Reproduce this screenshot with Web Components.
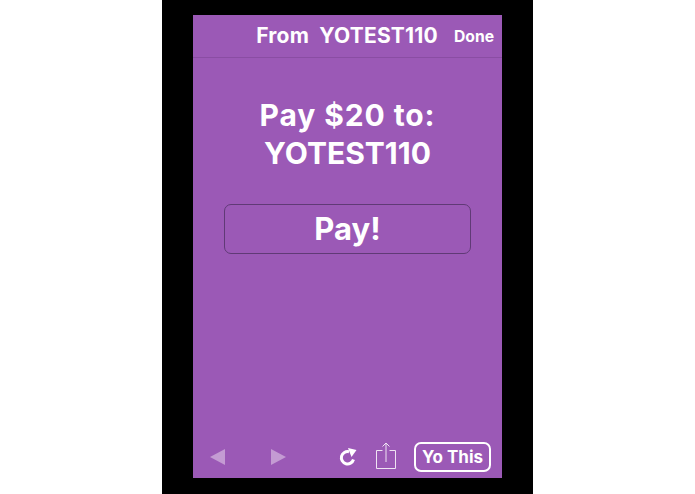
<!DOCTYPE html>
<html>
<head>
<meta charset="utf-8">
<title>Yo Pay</title>
<style>
html, body { margin: 0; padding: 0; background: #fff; height: 100%; overflow: hidden; }
body { font-family: "Inter", "Liberation Sans", sans-serif; color: #fff; }
</style>
</head>
<body>
<phone-frame>
    <top-bar slot="top" title-text="From  YOTEST110" action="Done"></top-bar>
    <pay-panel amount="$20" payee="YOTEST110"></pay-panel>
    <bottom-bar slot="bottom"></bottom-bar>
</phone-frame>

<script>
class PhoneFrame extends HTMLElement {
    constructor() {
        super();
        this.shadowDOM = this.attachShadow({mode: 'open'});
        this.shadowDOM.innerHTML = `
            <style>
                :host {
                    display: block;
                    width: 371px;
                    height: 494px;
                    margin-left: 162px;
                    background: #000;
                    padding: 15px 31px 16px;
                    box-sizing: border-box;
                }
                .screen {
                    height: 100%;
                    background: #9b59b6;
                    display: flex;
                    flex-direction: column;
                }
                .middle { flex: 1; }
            </style>
            <div class="screen">
                <slot name="top"></slot>
                <div class="middle"><slot></slot></div>
                <slot name="bottom"></slot>
            </div>
        `;
    }
}

class TopBar extends HTMLElement {
    constructor() {
        super();
        this.shadowDOM = this.attachShadow({mode: 'open'});
    }

    connectedCallback() {
        this.shadowDOM.innerHTML = `
            <style>
                :host {
                    display: flex;
                    height: 43px;
                    box-sizing: border-box;
                    border-bottom: 1px solid #8a4da3;
                    align-items: center;
                    justify-content: flex-end;
                    padding: 0 8px 2px 0;
                }
                .title {
                    font-size: 21px;
                    font-weight: 700;
                    letter-spacing: 0.2px;
                    white-space: pre;
                    margin-right: 16px;
                }
                .action {
                    font-size: 15.7px;
                    font-weight: 700;
                    padding-top: 2px;
                }
            </style>
            <span class="title">${this.getAttribute('title-text')}</span>
            <span class="action">${this.getAttribute('action')}</span>
        `;
    }
}

class PayPanel extends HTMLElement {
    constructor() {
        super();
        this.shadowDOM = this.attachShadow({mode: 'open'});
    }

    connectedCallback() {
        this.shadowDOM.innerHTML = `
            <style>
                :host {
                    display: flex;
                    flex-direction: column;
                    align-items: center;
                    padding-top: 38px;
                }
                .message {
                    font-size: 30px;
                    line-height: 38px;
                    font-weight: 700;
                    text-align: center;
                }
                .pay-line { letter-spacing: 0.9px; }
                button {
                    margin-top: 32px;
                    width: 247px;
                    height: 50px;
                    box-sizing: border-box;
                    background: transparent;
                    border: 1px solid #603a76;
                    border-radius: 7px;
                    color: #fff;
                    font: 700 31px "Inter", "Liberation Sans", sans-serif;
                    padding: 0 0 2px;
                }
            </style>
            <div class="message"><span class="pay-line">Pay ${this.getAttribute('amount')} to:</span><br>${this.getAttribute('payee')}</div>
            <button>Pay!</button>
        `;
    }
}

class BottomBar extends HTMLElement {
    constructor() {
        super();
        this.shadowDOM = this.attachShadow({mode: 'open'});
        this.shadowDOM.innerHTML = `
            <style>
                :host {
                    display: flex;
                    align-items: center;
                    height: 44px;
                    padding: 1px 11px 0 17px;
                    box-sizing: border-box;
                }
                svg { display: block; flex: none; }
                .back { margin-right: 46px; }
                .forward { margin-right: 53px; }
                .reload { margin-right: 19px; }
                .share { margin-right: 18px; margin-top: -2px; }
                .yo {
                    flex: none;
                    width: 77px;
                    height: 30px;
                    box-sizing: border-box;
                    border: 2px solid #fff;
                    border-radius: 7px;
                    font-size: 17px;
                    font-weight: 700;
                    display: flex;
                    align-items: center;
                    justify-content: center;
                }
            </style>
            <svg class="back" width="15" height="16" viewBox="0 0 15 16"><path d="M0 8 15 0V16Z" fill="#c49bd3"/></svg>
            <svg class="forward" width="15" height="16" viewBox="0 0 15 16"><path d="M15 8 0 0V16Z" fill="#c49bd3"/></svg>
            <svg class="reload" width="18" height="18" viewBox="0 0 18 18">
                <path d="M14.5 11.5A6.2 6.2 0 1 1 10 3.7" fill="none" stroke="#fff" stroke-width="3"/>
                <path d="M9 0 17.5 2 12.5 9Z" fill="#fff"/>
            </svg>
            <svg class="share" width="20" height="27" viewBox="0 0 20 27" fill="none" stroke="#efe4f3" stroke-width="1">
                <path d="M6.5 8.5H.5V26.5H19.5V8.5H13.5"/>
                <path d="M10 20V1M6.5 4.5 10 1 13.5 4.5"/>
            </svg>
            <div class="yo">Yo This</div>
        `;
    }
}

customElements.define('phone-frame', PhoneFrame);
customElements.define('top-bar', TopBar);
customElements.define('pay-panel', PayPanel);
customElements.define('bottom-bar', BottomBar);
</script>
</body>
</html>
